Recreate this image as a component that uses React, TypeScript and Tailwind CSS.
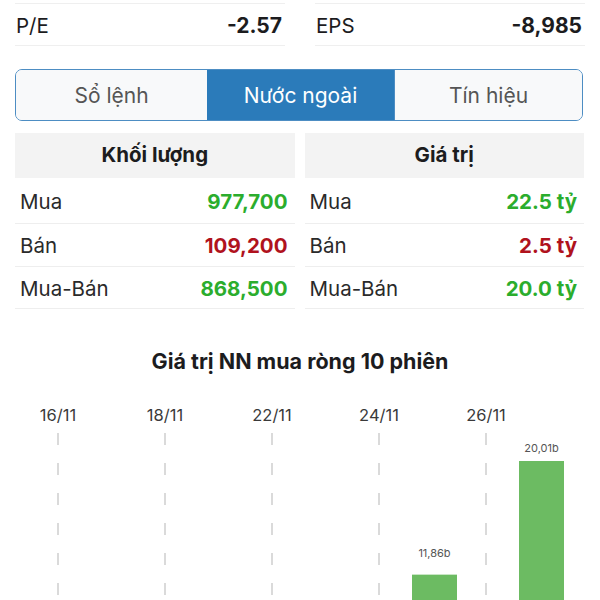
const font = "font-['Inter','Liberation_Sans',sans-serif]";

function StatCell({ label, value }: { label: string; value: string }) {
  return (
    <div className="mt-[3px] h-[43px] border-y border-[#efefef] flex items-center justify-between px-[1px] pt-[3px]">
      <span className="text-[20.5px] text-[#1c1c1e]">{label}</span>
      <span className="text-[21px] font-bold text-[#1c1c1e] pr-[2px]">{value}</span>
    </div>
  );
}

type Row = { label: string; value: string; tone: "up" | "down"; h: string };

function FlowTable({ title, rows }: { title: string; rows: Row[] }) {
  return (
    <div className="flex-1">
      <div className="h-[45px] bg-[#f3f3f3] flex items-center justify-center text-[20.5px] font-bold text-[#1c1c1e]">
        {title}
      </div>
      {rows.map((r) => (
        <div
          key={r.label}
          className={r.h + " border-b border-[#eeeeee] flex items-center justify-between pl-[5px] pr-[7px] pt-[3px]"}
        >
          <span className="text-[20.5px] text-[#2a2a2a]">{r.label}</span>
          <span
            className={
              "text-[20.5px] font-bold " +
              (r.tone === "up" ? "text-[#2bad2d]" : "text-[#b0121d]")
            }
          >
            {r.value}
          </span>
        </div>
      ))}
    </div>
  );
}

const dates = ["16/11", "18/11", "22/11", "24/11", "26/11"];
const bars = [
  { i: 7, value: 11.86, label: "11,86b", gap: 18 },
  { i: 9, value: 20.01, label: "20,01b", gap: 9 },
];

function NetBuyChart() {
  const step = 53.5;
  const x0 = 58;
  const base = 200 + 139; // baseline sits below the visible window
  const scale = (base - 60) / 20.01;
  return (
    <svg width={600} height={200} className="block">
      {dates.map((d, k) => {
        const cx = x0 + step * 2 * k;
        return (
          <g key={d}>
            <text
              x={cx}
              y={20}
              textAnchor="middle"
              fontSize={16.5}
              fill="#3a3a3a"
              fontFamily="Inter, 'Liberation Sans', sans-serif"
            >
              {d}
            </text>
            <line
              x1={cx}
              x2={cx}
              y1={32}
              y2={200}
              stroke="#b5b5b5"
              strokeWidth={1}
              strokeDasharray="12 18"
            />
          </g>
        );
      })}
      {bars.map((b) => {
        const cx = x0 + step * b.i + 2;
        const h = b.value * scale;
        const top = base - h;
        return (
          <g key={b.label}>
            <rect x={cx - 22.5} y={top} width={45} height={h} fill="#6cbb62" />
            <text
              x={cx}
              y={top - b.gap}
              textAnchor="middle"
              fontSize={11}
              fill="#555555"
              fontFamily="Inter, 'Liberation Sans', sans-serif"
            >
              {b.label}
            </text>
          </g>
        );
      })}
    </svg>
  );
}

export default function App() {
  return (
    <div className={"w-[600px] h-[600px] overflow-hidden bg-white " + font}>
      <div className="px-[15px] flex gap-[30px]">
        <div className="flex-1">
          <StatCell label="P/E" value="-2.57" />
        </div>
        <div className="flex-1">
          <StatCell label="EPS" value="-8,985" />
        </div>
      </div>

      <div className="mx-[15px] mt-[23px] mr-[17px] h-[52px] flex rounded-[7px] border-[1.5px] border-[#4d8dc3] overflow-hidden">
        <div className="w-[191px] flex items-center justify-center bg-[#f8f9fa] text-[21px] text-[#555555] pt-[2px]">
          Sổ lệnh
        </div>
        <div className="w-[187px] flex items-center justify-center bg-[#2b7bba] text-[21px] text-white pt-[2px]">
          Nước ngoài
        </div>
        <div className="flex-1 flex items-center justify-center bg-[#f8f9fa] text-[21px] text-[#555555] border-l-[1.5px] border-[#4d8dc3] pt-[2px]">
          Tín hiệu
        </div>
      </div>

      <div className="mt-[12px] pl-[15px] pr-[16px] flex gap-[10px]">
        <FlowTable
          title="Khối lượng"
          rows={[
            { label: "Mua", value: "977,700", tone: "up", h: "h-[46px]" },
            { label: "Bán", value: "109,200", tone: "down", h: "h-[43px]" },
            { label: "Mua-Bán", value: "868,500", tone: "up", h: "h-[42px]" },
          ]}
        />
        <FlowTable
          title="Giá trị"
          rows={[
            { label: "Mua", value: "22.5 tỷ", tone: "up", h: "h-[46px]" },
            { label: "Bán", value: "2.5 tỷ", tone: "down", h: "h-[43px]" },
            { label: "Mua-Bán", value: "20.0 tỷ", tone: "up", h: "h-[42px]" },
          ]}
        />
      </div>

      <div className="mt-[38px] text-center text-[21.5px] font-bold text-[#1c1c1e] leading-[28px]">
        Giá trị NN mua ròng 10 phiên
      </div>

      <div className="mt-[26px]">
        <NetBuyChart />
      </div>
    </div>
  );
}
